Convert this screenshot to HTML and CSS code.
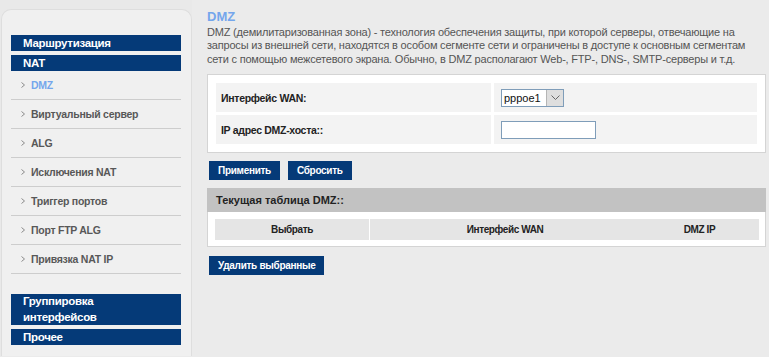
FILE: index.html
```html
<!DOCTYPE html>
<html lang="ru">
<head>
    <meta charset="UTF-8">
    <meta name="viewport" content="width=device-width, initial-scale=1.0">
    <title>DMZ</title>
    <link rel="stylesheet" href="styles.css">
</head>
<body>
    <div class="page">
        <div class="sidebar">
            <div class="panel">
                <div class="menu-head">Маршрутизация</div>
                <div class="menu-head">NAT</div>
                <ul class="submenu">
                    <li class="active"><svg class="bullet" width="4" height="6" viewBox="0 0 4 6"><path d="M0.5 0.5 L3.5 3 L0.5 5.5" fill="none" stroke="#8a8a8a" stroke-width="1"/></svg>DMZ</li>
                    <li><svg class="bullet" width="4" height="6" viewBox="0 0 4 6"><path d="M0.5 0.5 L3.5 3 L0.5 5.5" fill="none" stroke="#8a8a8a" stroke-width="1"/></svg>Виртуальный сервер</li>
                    <li><svg class="bullet" width="4" height="6" viewBox="0 0 4 6"><path d="M0.5 0.5 L3.5 3 L0.5 5.5" fill="none" stroke="#8a8a8a" stroke-width="1"/></svg>ALG</li>
                    <li><svg class="bullet" width="4" height="6" viewBox="0 0 4 6"><path d="M0.5 0.5 L3.5 3 L0.5 5.5" fill="none" stroke="#8a8a8a" stroke-width="1"/></svg>Исключения NAT</li>
                    <li><svg class="bullet" width="4" height="6" viewBox="0 0 4 6"><path d="M0.5 0.5 L3.5 3 L0.5 5.5" fill="none" stroke="#8a8a8a" stroke-width="1"/></svg>Триггер портов</li>
                    <li><svg class="bullet" width="4" height="6" viewBox="0 0 4 6"><path d="M0.5 0.5 L3.5 3 L0.5 5.5" fill="none" stroke="#8a8a8a" stroke-width="1"/></svg>Порт FTP ALG</li>
                    <li><svg class="bullet" width="4" height="6" viewBox="0 0 4 6"><path d="M0.5 0.5 L3.5 3 L0.5 5.5" fill="none" stroke="#8a8a8a" stroke-width="1"/></svg>Привязка NAT IP</li>
                </ul>
                <div class="menu-head tall">Группировка интерфейсов</div>
                <div class="menu-head">Прочее</div>
            </div>
        </div>

        <div class="content">
            <div class="page-title">DMZ</div>
            <div class="description">DMZ (демилитаризованная зона) - технология обеспечения защиты, при которой серверы, отвечающие на запросы из внешней сети, находятся в особом сегменте сети и ограничены в доступе к основным сегментам сети с помощью межсетевого экрана. Обычно, в DMZ располагают Web-, FTP-, DNS-, SMTP-серверы и т.д.</div>

            <div class="form-box">
                <table class="form-table">
                    <tr>
                        <td class="label">Интерфейс WAN:</td>
                        <td class="field">
                            <span class="select">
                                <span class="select-text">pppoe1</span>
                                <span class="select-btn"><svg width="9" height="5" viewBox="0 0 9 5"><path d="M0.5 0.5 L4.5 4.5 L8.5 0.5" fill="none" stroke="#666" stroke-width="1"/></svg></span>
                            </span>
                        </td>
                    </tr>
                    <tr>
                        <td class="label">IP адрес DMZ-хоста::</td>
                        <td class="field"><input class="text-input" type="text"></td>
                    </tr>
                </table>
            </div>

            <div class="buttons">
                <button class="btn">Применить</button>
                <button class="btn">Сбросить</button>
            </div>

            <div class="list-head">Текущая таблица DMZ::</div>
            <div class="list-box">
                <table class="list-table">
                    <tr>
                        <th class="col-select">Выбрать</th>
                        <th class="col-wan">Интерфейс WAN</th>
                        <th class="col-ip">DMZ IP</th>
                    </tr>
                </table>
            </div>

            <div class="buttons">
                <button class="btn">Удалить выбранные</button>
            </div>
        </div>
    </div>
</body>
</html>
```

FILE: styles.css
```css
body {
    margin: 0;
    padding: 0;
    background-color: #ebebeb;
    font-family: "Liberation Sans", Arial, sans-serif;
    font-size: 11px;
    color: #333;
}
.page {
    display: flex;
    align-items: flex-start;
}

/* left menu */
.sidebar {
    width: 191px;
    flex: none;
    padding: 9px 0 0 1px;
    background-color: #e9e9e9;
}
.panel {
    background-color: #f0f0f0;
    border: 1px solid #dedede;
    border-bottom: none;
    border-radius: 10px 10px 0 0;
    padding: 25px 10px 11px 9px;
}
.menu-head {
    background-color: #053a78;
    color: white;
    font-weight: bold;
    font-size: 11.5px;
    letter-spacing: -0.3px;
    height: 16px;
    line-height: 16px;
    padding-left: 12px;
    margin-bottom: 4px;
}
.menu-head:last-child {
    margin-bottom: 0;
}
.menu-head.tall {
    height: auto;
    line-height: 15.5px;
    padding-right: 40px;
}
.submenu {
    list-style: none;
    margin: -4px 0 20px 0;
    padding: 0;
}
.submenu li {
    height: 28px;
    line-height: 28px;
    border-bottom: 1px solid #cdcdcd;
    padding-left: 10px;
    font-weight: bold;
    font-size: 10.5px;
    letter-spacing: -0.25px;
    color: #585858;
    display: flex;
    align-items: center;
}
.submenu li.active {
    color: #74a6ec;
}
.bullet {
    margin-right: 6px;
}

/* main */
.content {
    flex: 1;
    padding: 9px 3px 0 15px;
}
.page-title {
    font-size: 13px;
    font-weight: bold;
    line-height: 16px;
    color: #74a6ec;
}
.description {
    margin-top: 1px;
    max-width: 546px;
    line-height: 13.4px;
    letter-spacing: -0.2px;
    color: #555;
}
.form-box {
    margin-top: 8px;
    background-color: white;
    border: 1px solid #d4d4d4;
    padding: 5px;
}
.form-table {
    width: 100%;
    border-spacing: 3px;
}
.form-table td {
    background-color: #f3f3f3;
    height: 29px;
    padding: 0;
    vertical-align: middle;
}
.form-table .label {
    width: 270px;
    padding-left: 5px;
    font-weight: bold;
    font-size: 10.5px;
    letter-spacing: -0.3px;
    color: #222;
}
.form-table .field {
    padding-left: 7px;
}
.select {
    display: inline-flex;
    vertical-align: middle;
    height: 16px;
    border: 1px solid #7f9db9;
    background-color: white;
}
.select-text {
    width: 42px;
    padding-left: 2px;
    line-height: 16px;
    font-size: 11px;
    color: #111;
}
.select-btn {
    width: 16px;
    background-color: #dedede;
    border-left: 1px solid #b5b5b5;
    display: flex;
    align-items: center;
    justify-content: center;
}
.text-input {
    display: block;
    width: 91px;
    height: 14px;
    padding: 1px;
    margin: 0;
    border: 1px solid #7f9db9;
}

.buttons {
    display: flex;
    gap: 8px;
    margin-top: 8px;
    padding-left: 2px;
}
.btn {
    background-color: #053a78;
    color: white;
    border: none;
    font-family: "Liberation Sans", Arial, sans-serif;
    font-size: 10px;
    font-weight: bold;
    letter-spacing: -0.3px;
    height: 19px;
    padding: 0 9px;
    margin: 0;
}

.list-head {
    margin-top: 8px;
    background-color: #c2c2c2;
    height: 24px;
    line-height: 24px;
    padding-left: 9px;
    font-weight: bold;
    color: #222;
}
.list-box {
    background-color: white;
    border: 1px solid #d4d4d4;
    border-top: none;
    padding: 7px 6px 6px 7px;
}
.list-table {
    width: 100%;
    border-collapse: collapse;
}
.list-table th {
    background-color: #e5e5e5;
    height: 21px;
    padding: 0;
    font-weight: bold;
    font-size: 10px;
    letter-spacing: -0.4px;
    color: #222;
}
.col-select {
    width: 154px;
}
.col-wan {
    width: 270px;
    border-left: 1px solid white;
}
.list-box + .buttons {
    margin-top: 9px;
}
```
